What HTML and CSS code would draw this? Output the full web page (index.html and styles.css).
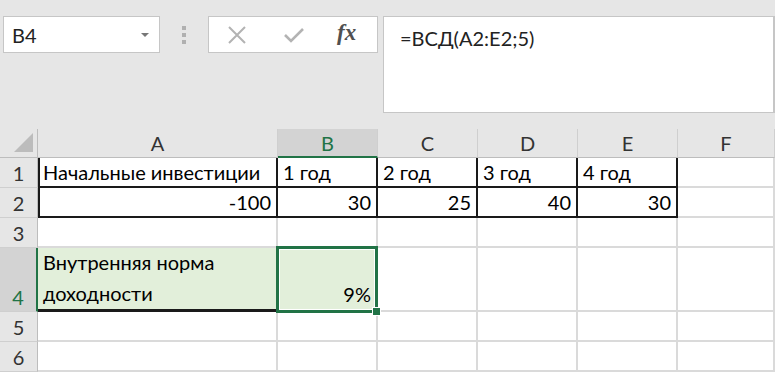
FILE: index.html
```html
<!DOCTYPE html>
<html>
  <head>
    <title>ВСД</title>
    <link rel="stylesheet" href="styles.css">
  </head>
  <body>
    <div class="paneel">
      <div class="naamvak">
        <span>B4</span>
        <span class="pijl"></span>
      </div>
      <div class="puntjes"><i></i><i></i><i></i></div>
      <div class="knoppen">
        <svg class="ikoon" width="20" height="18" viewBox="0 0 20 18">
          <path d="M2 1 L18 17 M18 1 L2 17" stroke="#b3b3b3" stroke-width="2" fill="none" />
        </svg>
        <svg class="ikoon" width="22" height="18" viewBox="0 0 22 18">
          <path d="M2 9 L8 15 L20 3" stroke="#b3b3b3" stroke-width="2.6" fill="none" />
        </svg>
        <span class="fx">fx</span>
      </div>
      <div class="formulebalk">=ВСД(A2:E2;5)</div>
    </div>

    <div class="blad">
      <div class="kop hoek"><span class="driehoek"></span></div>
      <div class="kop">A</div>
      <div class="kop actief">B</div>
      <div class="kop">C</div>
      <div class="kop">D</div>
      <div class="kop">E</div>
      <div class="kop">F</div>

      <div class="rij">1</div>
      <div class="cel zwart links">Начальные инвестиции</div>
      <div class="cel zwart">1 год</div>
      <div class="cel zwart">2 год</div>
      <div class="cel zwart">3 год</div>
      <div class="cel zwart">4 год</div>
      <div class="cel"></div>

      <div class="rij">2</div>
      <div class="cel zwart links getal">-100</div>
      <div class="cel zwart getal">30</div>
      <div class="cel zwart getal">25</div>
      <div class="cel zwart getal">40</div>
      <div class="cel zwart getal">30</div>
      <div class="cel"></div>

      <div class="rij">3</div>
      <div class="cel"></div>
      <div class="cel"></div>
      <div class="cel"></div>
      <div class="cel"></div>
      <div class="cel"></div>
      <div class="cel"></div>

      <div class="rij actief">4</div>
      <div class="cel groen onderrand">Внутренняя норма<br>доходности</div>
      <div class="cel groen getal selectie">9%<span class="greep"></span></div>
      <div class="cel"></div>
      <div class="cel"></div>
      <div class="cel"></div>
      <div class="cel"></div>

      <div class="rij">5</div>
      <div class="cel"></div>
      <div class="cel"></div>
      <div class="cel"></div>
      <div class="cel"></div>
      <div class="cel"></div>
      <div class="cel"></div>

      <div class="rij">6</div>
      <div class="cel"></div>
      <div class="cel"></div>
      <div class="cel"></div>
      <div class="cel"></div>
      <div class="cel"></div>
      <div class="cel"></div>
    </div>
  </body>
</html>
```

FILE: styles.css
```css
body {
  margin: 0;
  background-color: #e6e6e6;
  font-family: Lato, "Open Sans", sans-serif;
  font-size: 20px;
  color: #000;
  overflow: hidden;
}
.paneel {
  height: 129px;
  box-sizing: border-box;
  padding: 16px 0 16px 3px;
  display: flex;
  align-items: flex-start;
}
.naamvak {
  width: 157px;
  height: 37px;
  box-sizing: border-box;
  border: 1px solid #c6c6c6;
  background-color: white;
  display: flex;
  align-items: center;
  justify-content: space-between;
  padding: 0 10px 0 8px;
  color: #222;
}
.pijl {
  width: 0;
  height: 0;
  border-left: 4px solid transparent;
  border-right: 4px solid transparent;
  border-top: 4px solid #777;
}
.puntjes {
  width: 48px;
  height: 37px;
  display: flex;
  flex-direction: column;
  align-items: center;
  justify-content: center;
  gap: 3px;
}
.puntjes i {
  width: 4px;
  height: 4px;
  background-color: #b0b0b0;
}
.knoppen {
  width: 170px;
  height: 37px;
  box-sizing: border-box;
  border: 1px solid #c6c6c6;
  background-color: white;
  display: flex;
  align-items: center;
  padding-left: 18px;
  gap: 36px;
}
.fx {
  font-family: "Liberation Serif", serif;
  font-style: italic;
  font-weight: bold;
  font-size: 23px;
  color: #505050;
  margin-left: -4px;
  margin-top: -3px;
}
.formulebalk {
  flex: 1;
  height: 97px;
  margin-left: 5px;
  box-sizing: border-box;
  border: 1px solid #c6c6c6;
  border-right-width: 2px;
  background-color: white;
  padding: 6px 0 0 16px;
  line-height: 30px;
  color: #222;
}
.blad {
  display: grid;
  grid-template-columns: 38px 240px 100px 100px 100px 100px 1fr;
  grid-template-rows: 29px 30px 30px 30px 64px 30px 30px;
  background-color: white;
}
.kop {
  background-color: #e6e6e6;
  border-right: 1px solid #cfcfcf;
  border-bottom: 1px solid #bdbdbd;
  display: flex;
  align-items: center;
  justify-content: center;
  color: #333;
}
.kop.actief {
  background-color: #d3d3d3;
  color: #217346;
  border-bottom: 2px solid #217346;
}
.hoek {
  position: relative;
  border-right: 1px solid #bdbdbd;
}
.driehoek {
  position: absolute;
  right: 4px;
  bottom: 5px;
  width: 0;
  height: 0;
  border-left: 19px solid transparent;
  border-bottom: 19px solid #bcbcbc;
}
.rij {
  background-color: #e6e6e6;
  border-right: 1px solid #bdbdbd;
  border-bottom: 1px solid #cfcfcf;
  display: flex;
  align-items: flex-end;
  justify-content: center;
  line-height: 28px;
  color: #333;
}
.rij.actief {
  background-color: #d3d3d3;
  color: #217346;
  border-right: 2px solid #217346;
}
.cel {
  box-sizing: border-box;
  border-right: 2px solid #dadada;
  border-bottom: 2px solid #dadada;
  padding: 0 5px;
  line-height: 28px;
  display: flex;
  flex-direction: column;
  justify-content: flex-end;
  white-space: nowrap;
}
.zwart {
  border-right-color: #1a1a1a;
  border-bottom-color: #1a1a1a;
}
.links {
  border-left: 2px solid #1a1a1a;
  padding-left: 3px;
}
.getal {
  text-align: right;
}
.groen {
  background-color: #e2efda;
  line-height: 31px;
}
.onderrand {
  border-bottom: 3px solid #1a1a1a;
}
.selectie {
  position: relative;
  border-right-color: #dadada;
}
.selectie::after {
  content: "";
  position: absolute;
  left: -2px;
  top: -2px;
  right: -2px;
  bottom: -3px;
  border: 3px solid #217346;
  box-shadow: inset 0 0 0 1px white;
}
.greep {
  position: absolute;
  right: -5px;
  bottom: -6px;
  width: 7px;
  height: 7px;
  background-color: #217346;
  border: 1px solid white;
  z-index: 1;
}
```
